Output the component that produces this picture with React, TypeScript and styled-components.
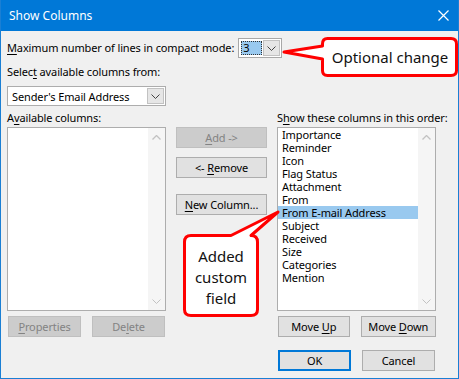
import { FC, ReactNode } from 'react'
import styled, { createGlobalStyle, css } from 'styled-components'

/**
 * Data
 */

const shownColumns = [
  'Importance',
  'Reminder',
  'Icon',
  'Flag Status',
  'Attachment',
  'From',
  'From E-mail Address',
  'Subject',
  'Received',
  'Size',
  'Categories',
  'Mention'
]

const SELECTED = 'From E-mail Address'
const uiFont = `"Noto Sans", "Open Sans", sans-serif`

/**
 * Small pieces
 */

const Chevron: FC<{ color?: string }> = ({ color = '#444' }) => (
  <svg width="9" height="5" viewBox="0 0 9 5">
    <polyline points="0.5,0.5 4.5,4.5 8.5,0.5" fill="none" stroke={color} strokeWidth="1" />
  </svg>
)

const ChevronUp: FC<{ color?: string }> = ({ color = '#c2c2c2' }) => (
  <svg width="9" height="5" viewBox="0 0 9 5">
    <polyline points="0.5,4.5 4.5,0.5 8.5,4.5" fill="none" stroke={color} strokeWidth="1.3" />
  </svg>
)

const Mnemonic: FC<{ before?: string; k: string; after?: string }> = ({ before, k, after }) => (
  <>
    {before}
    <StyledKey>{k}</StyledKey>
    {after}
  </>
)

const Scrollbar: FC = () => (
  <StyledScroll>
    <ChevronUp />
    <Chevron color="#c2c2c2" />
  </StyledScroll>
)

const ListBox: FC<{ children?: ReactNode }> = ({ children }) => (
  <StyledList>
    <StyledListItems>{children}</StyledListItems>
    <Scrollbar />
  </StyledList>
)

/**
 * Callouts
 */

const OptionalCallout: FC = () => (
  <StyledCallout style={{ left: 278, top: 33, width: 181, height: 47 }}>
    <svg width="181" height="47" viewBox="0 0 181 47">
      <path
        d="M 48.5 5.5 H 172 Q 177.5 5.5 177.5 11 V 37.5 Q 177.5 42.5 172 42.5 H 48.5 Q 43.5 42.5 43.5 37.5 V 26 L 5 19 L 43.5 13 V 11 Q 43.5 5.5 48.5 5.5 Z"
        fill="#fff"
        stroke="#ff0000"
        strokeWidth="3"
        strokeLinejoin="round"
      />
    </svg>
    <StyledCalloutText style={{ left: 44, top: 5, width: 134, height: 38 }}>
      Optional change
    </StyledCalloutText>
  </StyledCallout>
)

const AddedCallout: FC = () => (
  <StyledCallout style={{ left: 178, top: 208, width: 104, height: 113 }}>
    <svg width="104" height="113" viewBox="0 0 104 113">
      <path
        d="M 12 27.5 H 52 L 99 4 L 72 27.5 H 72 Q 78.5 27.5 78.5 34 V 101.5 Q 78.5 107.5 72 107.5 H 12 Q 5.5 107.5 5.5 101.5 V 34 Q 5.5 27.5 12 27.5 Z"
        fill="#fff"
        stroke="#ff0000"
        strokeWidth="3"
        strokeLinejoin="round"
      />
    </svg>
    <StyledCalloutText style={{ left: 5, top: 33, width: 74, height: 72 }}>
      Added
      <br />
      custom
      <br />
      field
    </StyledCalloutText>
  </StyledCallout>
)

/**
 * App
 */

const App: FC = () => (
  <>
    <GlobalStyle />
    <StyledDialog>
      <StyledTitleBar>
        <span>Show Columns</span>
        <svg width="11" height="11" viewBox="0 0 11 11">
          <path d="M0.5 0.5 L10.5 10.5 M10.5 0.5 L0.5 10.5" stroke="#fff" strokeWidth="1.2" />
        </svg>
      </StyledTitleBar>

      <StyledBody>
        <StyledCompactRow>
          <StyledLabel>
            <Mnemonic k="M" after="aximum number of lines in compact mode:" />
          </StyledLabel>
          <StyledSmallCombo>
            <StyledSelectedValue>3</StyledSelectedValue>
            <StyledDropButton>
              <Chevron />
            </StyledDropButton>
          </StyledSmallCombo>
        </StyledCompactRow>

        <StyledLabel $top={7}>
          <Mnemonic before="Selec" k="t" after=" available columns from:" />
        </StyledLabel>
        <StyledCombo>
          <span>Sender's Email Address</span>
          <StyledDropButton>
            <Chevron />
          </StyledDropButton>
        </StyledCombo>

        <StyledGrid>
          <StyledLabel>
            <Mnemonic before="A" k="v" after="ailable columns:" />
          </StyledLabel>
          <span />
          <StyledLabel>
            <Mnemonic before="S" k="h" after="ow these columns in this order:" />
          </StyledLabel>

          <ListBox />
          <StyledMiddle>
            <StyledButton disabled>
              <Mnemonic k="A" after="dd ->" />
            </StyledButton>
            <StyledButton>
              <Mnemonic before="<- " k="R" after="emove" />
            </StyledButton>
            <StyledButton $top={7}>
              <Mnemonic k="N" after="ew Column..." />
            </StyledButton>
          </StyledMiddle>
          <ListBox>
            {shownColumns.map(name => (
              <StyledItem key={name} $selected={name === SELECTED}>
                {name}
              </StyledItem>
            ))}
          </ListBox>

          <StyledPair>
            <StyledButton disabled $width={73}>
              <Mnemonic k="P" after="roperties" />
            </StyledButton>
            <StyledButton disabled $width={73}>
              <Mnemonic before="De" k="l" after="ete" />
            </StyledButton>
          </StyledPair>
          <span />
          <StyledPair>
            <StyledButton $width={73}>
              <Mnemonic before="Move " k="U" after="p" />
            </StyledButton>
            <StyledButton $width={77}>
              <Mnemonic before="Move " k="D" after="own" />
            </StyledButton>
          </StyledPair>

          <span />
          <span />
          <StyledPair $top={13}>
            <StyledButton $width={73} $primary>
              OK
            </StyledButton>
            <StyledButton $width={73}>Cancel</StyledButton>
          </StyledPair>
        </StyledGrid>
      </StyledBody>

      <OptionalCallout />
      <AddedCallout />
    </StyledDialog>
  </>
)

export default App

/**
 * Styled Component
 */

const GlobalStyle = createGlobalStyle`
  html, body {
    margin: 0;
    padding: 0;
    background: #f0f0f0;
  }
`

const StyledDialog = styled.div`
  position: relative;
  width: 459px;
  height: 379px;
  box-sizing: border-box;
  border: 1px solid #1a7fd4;
  border-top: none;
  background: #f0f0f0;
  font-family: ${uiFont};
  font-size: 11px;
  letter-spacing: -0.12px;
  color: #000;
  overflow: hidden;
`

const StyledTitleBar = styled.div`
  height: 31px;
  margin: 0 -1px;
  padding: 0 10px 0 9px;
  display: flex;
  align-items: center;
  justify-content: space-between;
  background: #0078d7;
  color: #fff;
  font-size: 12px;
  letter-spacing: 0;
`

const StyledBody = styled.div`
  padding: 7px 0 0 6px;
`

const StyledKey = styled.span`
  text-decoration: underline;
  text-underline-offset: 2px;
`

const StyledLabel = styled.div<{ $top?: number }>`
  line-height: 14px;
  white-space: nowrap;
  ${({ $top }) =>
    $top !== undefined &&
    css`
      margin-top: ${$top}px;
    `}
`

const StyledCompactRow = styled.div`
  display: flex;
  align-items: center;
  gap: 4px;
  height: 20px;
`

const StyledSmallCombo = styled.div`
  display: flex;
  align-items: center;
  gap: 1px;
  width: 44px;
  height: 20px;
  box-sizing: border-box;
  padding: 0 1px 0 2px;
  border: 1px solid #a8a8a8;
  background: #fff;
`

const StyledSelectedValue = styled.span`
  width: 21px;
  height: 14px;
  box-sizing: border-box;
  border: 1px dotted #333;
  background: #99c9ef;
  line-height: 12px;
  padding-left: 1px;
`

const StyledDropButton = styled.span`
  display: flex;
  align-items: center;
  justify-content: center;
  width: 17px;
  height: 16px;
  box-sizing: border-box;
  border: 1px solid #c2c2c2;
  background: #e6e6e6;
`

const StyledCombo = styled.div`
  display: flex;
  align-items: center;
  justify-content: space-between;
  margin-top: 7px;
  width: 159px;
  height: 20px;
  box-sizing: border-box;
  padding: 0 1px 0 4px;
  border: 1px solid #adadad;
  background: #fff;
`

const StyledGrid = styled.div`
  display: grid;
  grid-template-columns: 159px 91px 159px;
  column-gap: 10px;
  margin-top: 5px;
`

const StyledList = styled.div`
  display: flex;
  margin-top: 2px;
  height: 184px;
  box-sizing: border-box;
  border: 1px solid #adadad;
  background: #fff;
`

const StyledListItems = styled.div`
  flex: 1;
`

const StyledItem = styled.div<{ $selected?: boolean }>`
  height: 13px;
  line-height: 13px;
  padding-left: 4px;
  white-space: nowrap;
  ${({ $selected }) =>
    $selected &&
    css`
      background: #99c9ef;
    `}
`

const StyledScroll = styled.div`
  width: 17px;
  display: flex;
  flex-direction: column;
  align-items: center;
  justify-content: space-between;
  padding: 7px 0 6px;
  background: #f5f5f5;
`

const StyledMiddle = styled.div`
  display: flex;
  flex-direction: column;
  gap: 9px;
  margin-top: 2px;
`

const StyledButton = styled.button<{ $width?: number; $top?: number; $primary?: boolean }>`
  height: 21px;
  box-sizing: border-box;
  padding: 0;
  border: 1px solid #adadad;
  background: #e1e1e1;
  color: #000;
  font-family: ${uiFont};
  font-size: 11px;
  letter-spacing: -0.12px;
  white-space: nowrap;
  ${({ $width }) =>
    $width !== undefined &&
    css`
      width: ${$width}px;
    `}
  ${({ $top }) =>
    $top !== undefined &&
    css`
      margin-top: ${$top}px;
    `}
  ${({ $primary }) =>
    $primary &&
    css`
      border: 2px solid #0078d7;
    `}
  &:disabled {
    background: #cccccc;
    border-color: #bfbfbf;
    color: #838383;
  }
`

const StyledPair = styled.div<{ $top?: number }>`
  display: flex;
  gap: 11px;
  margin-top: ${({ $top }) => $top ?? 5}px;
  padding-left: 1px;
`

const StyledCallout = styled.div`
  position: absolute;
  pointer-events: none;
`

const StyledCalloutText = styled.div`
  position: absolute;
  display: flex;
  align-items: center;
  justify-content: center;
  text-align: center;
  font-size: 15px;
  line-height: 21px;
  letter-spacing: 0;
  color: #111;
`
